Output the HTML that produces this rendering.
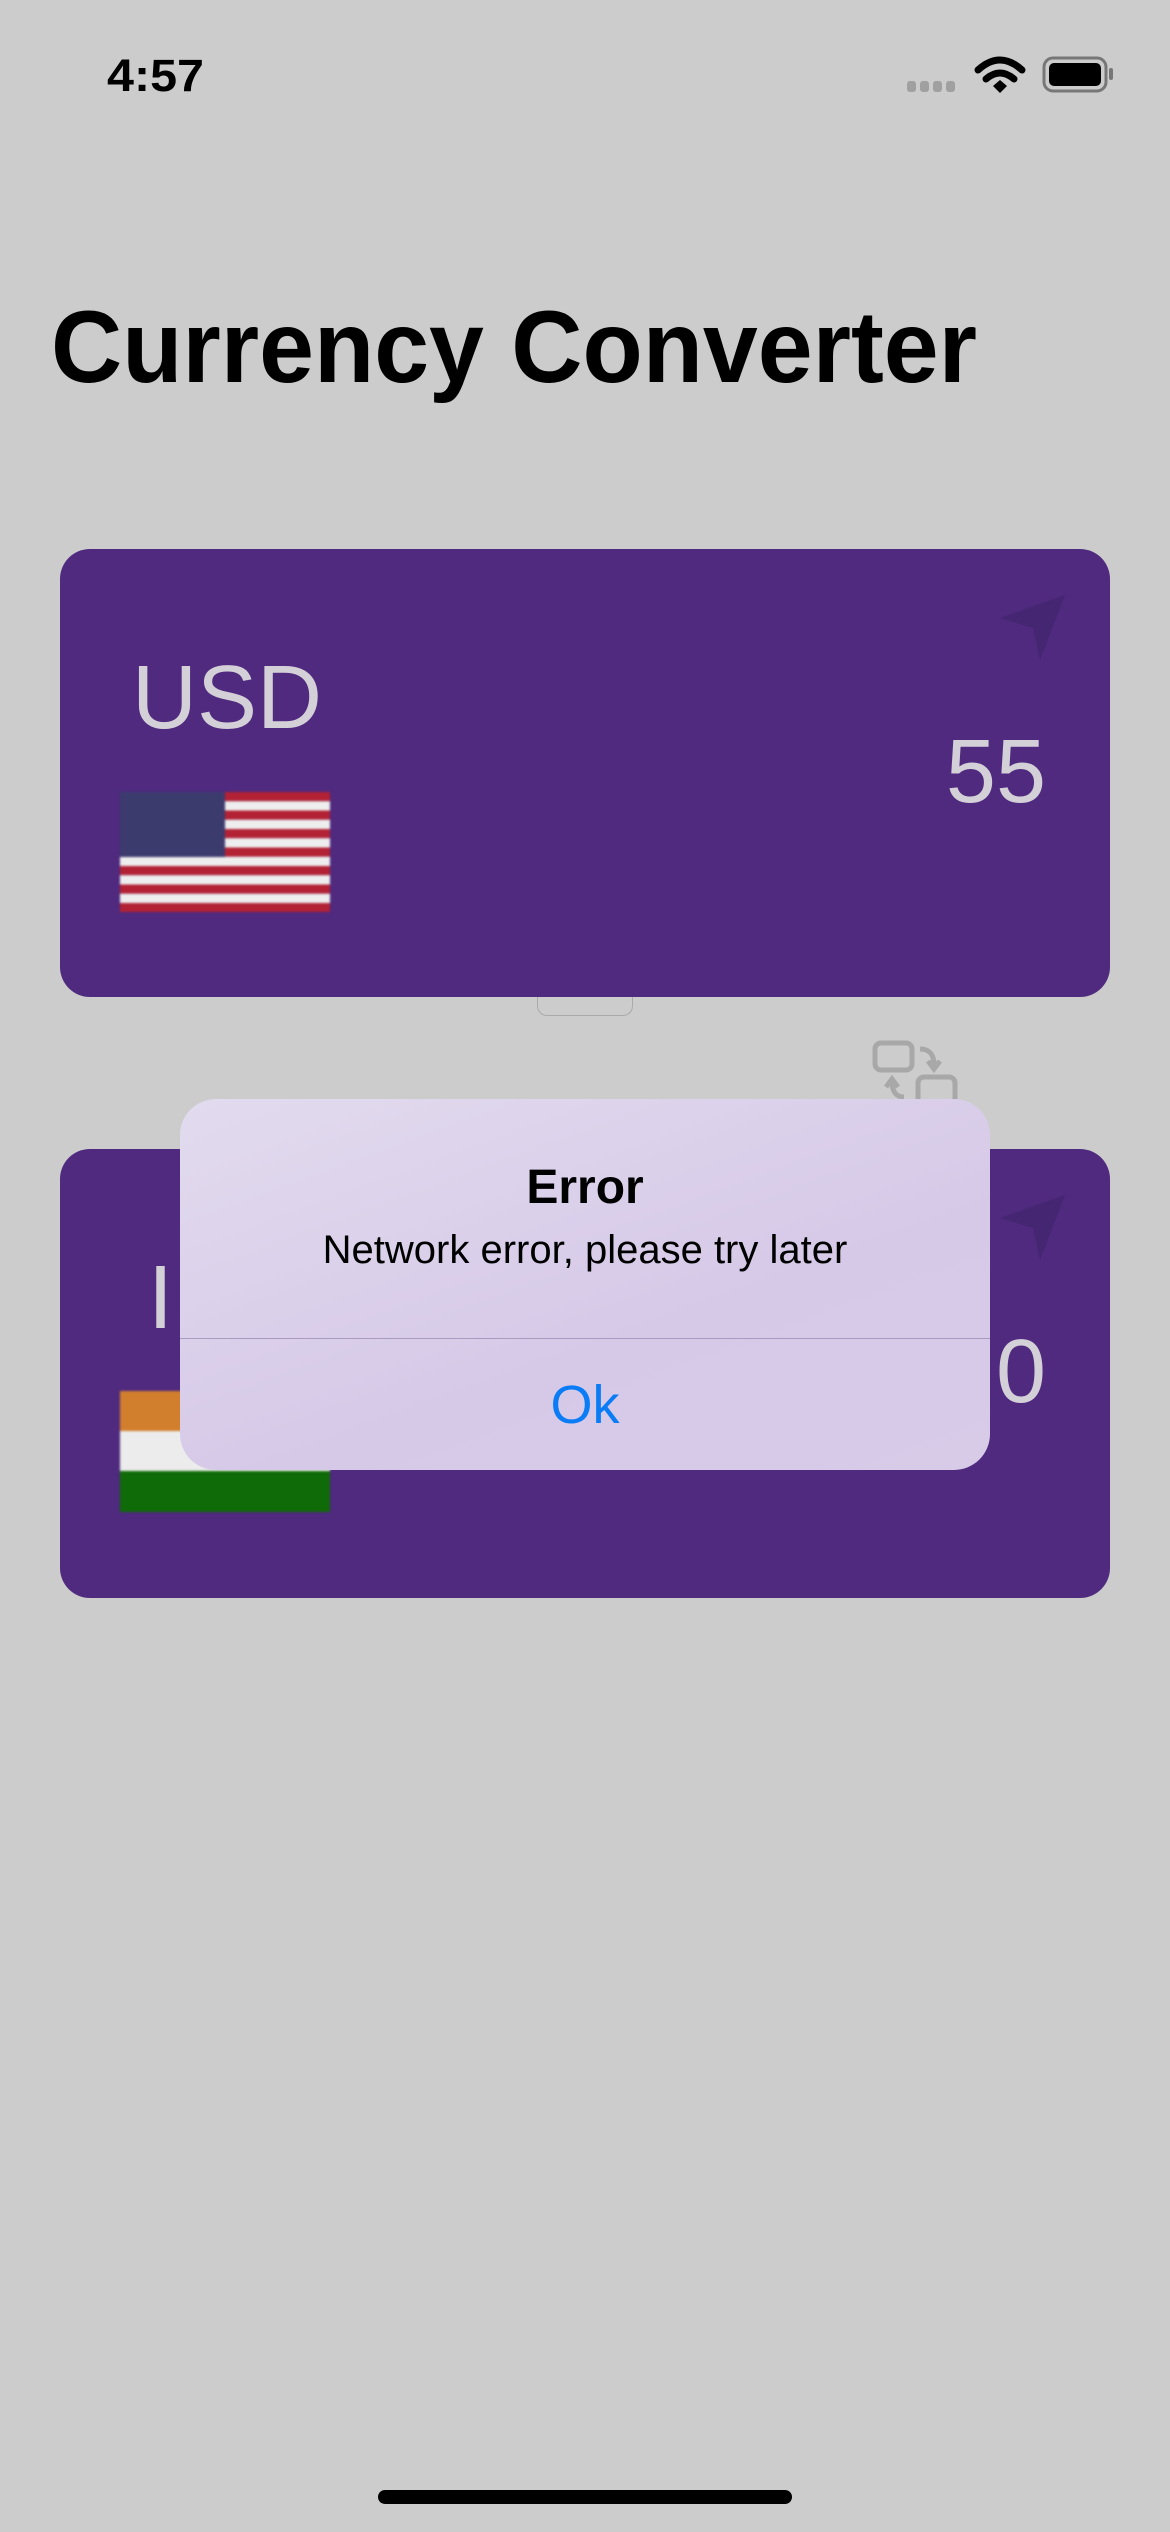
<!DOCTYPE html>
<html><head><meta charset="utf-8"><style>
body{margin:0;width:1170px;height:2532px;background:#cccccc;position:relative;overflow:hidden;font-family:"Liberation Sans",sans-serif}
.a{position:absolute}
.card{position:absolute;left:60px;width:1050px;background:#4f2a7f;border-radius:30px}
.lt{color:#d4d0d8;font-family:"Liberation Sans",sans-serif;font-size:90px;line-height:100px}
</style></head><body>
<svg class="a" style="left:0;top:0" width="1170" height="420">
<text x="107" y="91" font-family="Liberation Sans" font-weight="bold" font-size="45" textLength="97" lengthAdjust="spacingAndGlyphs">4:57</text>
<g fill="#a0a0a0"><rect x="907" y="81" width="9" height="11" rx="3"/><rect x="920" y="81" width="9" height="11" rx="3"/><rect x="933" y="81" width="9" height="11" rx="3"/><rect x="946" y="81" width="9" height="11" rx="3"/></g>
<g fill="none" stroke="#000" stroke-width="7" stroke-linecap="round">
<path d="M978 70 Q1000 50 1022 70"/><path d="M986 79 Q1000 67 1014 79"/></g>
<path d="M993 86 L1000 80 L1007 86 L1000 93Z" fill="#000"/>
<rect x="1044" y="58" width="62" height="33" rx="9" fill="none" stroke="#777" stroke-width="3"/>
<rect x="1049" y="63" width="52" height="23" rx="5" fill="#000"/>
<rect x="1109" y="68" width="4" height="12" rx="2" fill="#777"/>
<text x="51" y="382" font-family="Liberation Sans" font-weight="bold" font-size="102" textLength="926" lengthAdjust="spacingAndGlyphs">Currency Converter</text>
</svg>

<div class="card" style="top:549px;height:448px"></div>
<div class="a lt" style="left:132px;top:648px">USD</div>
<div class="a lt" style="right:124px;top:722px">55</div>
<svg class="a" style="left:120px;top:792px;filter:blur(1px)" width="210" height="120">
<defs><pattern id="s" width="210" height="18.5" patternUnits="userSpaceOnUse"><rect width="210" height="9.2" fill="#b22234"/><rect y="9.2" width="210" height="9.3" fill="#eee"/></pattern></defs>
<rect width="210" height="120" fill="url(#s)"/><rect width="105" height="65" fill="#3c3b6e"/>
</svg>
<svg class="a" style="left:995px;top:590px" width="75" height="75"><path d="M5 28 L70 5 L45 70 L38 38Z" fill="#452672"/></svg>

<div class="a" style="left:537px;top:997px;width:94px;height:18px;border:1px solid #aaa;border-top:none;border-radius:0 0 10px 10px"></div>
<svg class="a" style="left:870px;top:1035px" width="90" height="80" fill="none" stroke="#a8a8a8" stroke-width="5">
<rect x="5" y="8" width="37" height="27" rx="6"/><rect x="48" y="42" width="37" height="27" rx="6"/>
<path d="M50 14 Q64 14 64 30"/><path d="M58 26 L64 34 L70 26"/><path d="M34 62 Q22 62 22 46"/><path d="M16 52 L22 44 L28 52"/></svg>

<div class="card" style="top:1149px;height:449px"></div>
<div class="a lt" style="left:148px;top:1248px">I</div>
<div class="a lt" style="right:124px;top:1322px">0</div>
<div class="a" style="left:120px;top:1391px;width:210px;height:121px;background:linear-gradient(#d17f2d 0 33%,#ececec 33% 66%,#0f6b07 66%);filter:blur(1px)"></div>
<svg class="a" style="left:995px;top:1190px" width="75" height="75"><path d="M5 28 L70 5 L45 70 L38 38Z" fill="#452672"/></svg>

<div class="a" style="left:180px;top:1099px;width:810px;height:371px;border-radius:36px;background:linear-gradient(160deg,#e2dbee,#d6c9e8 60%,#d7cbe8)"></div>
<div class="a" style="left:180px;top:1338px;width:810px;height:1px;background:#a99bc0"></div>
<div class="a" style="left:180px;top:1160px;width:810px;text-align:center;font-weight:bold;font-size:48px;color:#000">Error</div>
<div class="a" style="left:180px;top:1228px;width:810px;text-align:center;font-size:40px;color:#000">Network error, please try later</div>
<div class="a" style="left:180px;top:1374px;width:810px;text-align:center;font-size:54px;color:#0a7cf5">Ok</div>

<div class="a" style="left:378px;top:2490px;width:414px;height:14px;border-radius:7px;background:#000"></div>
</body></html>
